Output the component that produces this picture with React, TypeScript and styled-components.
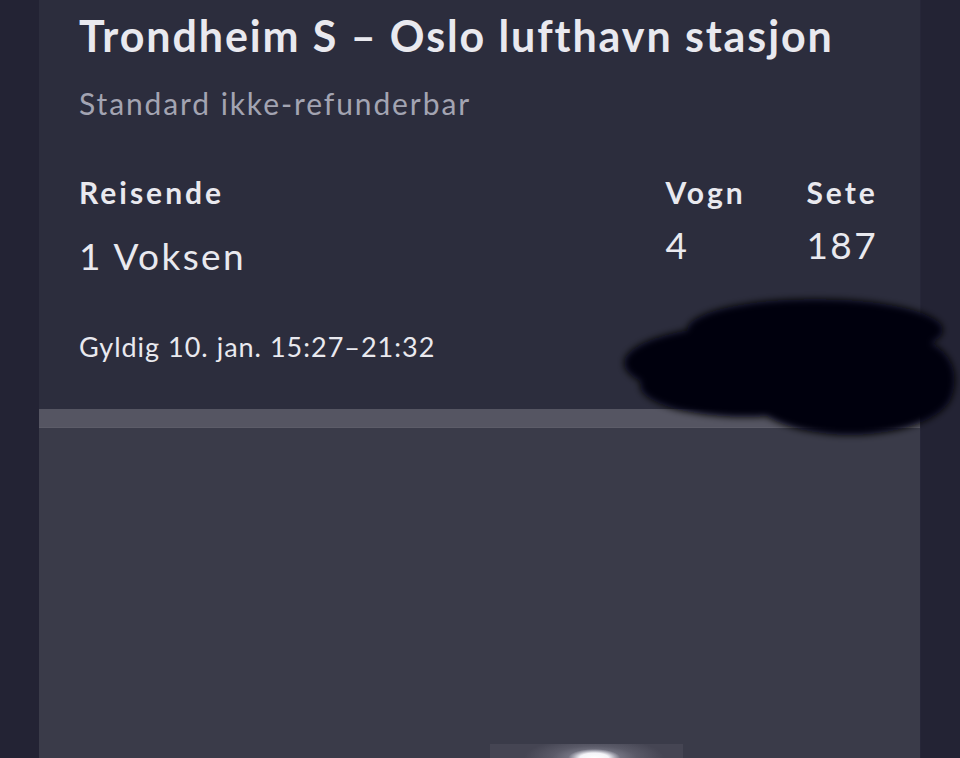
import styled, { createGlobalStyle } from "styled-components";

const GlobalStyle = createGlobalStyle`
    html, body {
        margin: 0;
        padding: 0;
        background: #232334;
    }
    body {
        font-family: Lato, "Open Sans", sans-serif;
        -webkit-font-smoothing: antialiased;
    }
`;

const Page = styled.div`
    position: relative;
    display: flex;
    height: 758px;
    overflow: hidden;
    padding-left: 39px;
    background: #232334;
`;

const Ticket = styled.div`
    width: 882px;
    display: flex;
    flex-direction: column;
    border-right: 1px solid #262638;
    box-sizing: border-box;
`;

const Header = styled.div`
    background: #2c2d3d;
    padding: 14px 42px 49px 40px;
    color: #e9e9ef;
`;

const Title = styled.h1`
    margin: 0;
    font-size: 43px;
    line-height: 1;
    font-weight: 700;
    letter-spacing: 1.9px;
`;

const Subtitle = styled.p`
    margin: 31px 0 0;
    font-size: 30px;
    line-height: 1;
    color: #a3a4b2;
    letter-spacing: 1.9px;
`;

const InfoRow = styled.div`
    display: flex;
    justify-content: space-between;
    margin-top: 59px;
`;

const Field = styled.div<{ $gap: number; $width?: number }>`
    display: flex;
    flex-direction: column;
    gap: ${(p) => p.$gap}px;
    width: ${(p) => (p.$width ? `${p.$width}px` : "auto")};
`;

const SeatGroup = styled.div`
    display: flex;
`;

const Label = styled.span`
    font-size: 30px;
    line-height: 1;
    font-weight: 700;
    letter-spacing: 3px;
`;

const Value = styled.span`
    font-size: 37px;
    line-height: 1;
    letter-spacing: 2.4px;
`;

const Valid = styled.p`
    margin: 59px 0 0;
    font-size: 27px;
    line-height: 1;
    letter-spacing: 1px;
`;

const Divider = styled.div`
    height: 19px;
    background: #555562;
    border-bottom: 1px solid #5c5c68;
    box-sizing: border-box;
`;

const Body = styled.div`
    flex: 1;
    background: #3a3b49;
    display: flex;
    flex-direction: column;
    justify-content: flex-end;
    align-items: center;
`;

const CodeGlare = styled.div`
    width: 193px;
    height: 14px;
    margin-left: 214px;
    background:
        radial-gradient(ellipse 26px 9px at 54% 100%, #ffffff 0%, #f4f4f8 55%, rgba(200, 200, 210, 0.6) 80%, rgba(200, 200, 210, 0) 100%),
        radial-gradient(ellipse 70px 20px at 54% 100%, #9a9aa8 0%, #5a5a68 60%, #454553 100%);
`;

const Scribble = styled.svg`
    position: absolute;
    left: 615px;
    top: 285px;
`;

export default function App() {
    return (
        <Page>
            <GlobalStyle />
            <Ticket>
                <Header>
                    <Title>Trondheim S – Oslo lufthavn stasjon</Title>
                    <Subtitle>Standard ikke-refunderbar</Subtitle>
                    <InfoRow>
                        <Field $gap={30}>
                            <Label>Reisende</Label>
                            <Value>1 Voksen</Value>
                        </Field>
                        <SeatGroup>
                            <Field $gap={19} $width={141}>
                                <Label>Vogn</Label>
                                <Value>4</Value>
                            </Field>
                            <Field $gap={19}>
                                <Label>Sete</Label>
                                <Value>187</Value>
                            </Field>
                        </SeatGroup>
                    </InfoRow>
                    <Valid>Gyldig 10. jan. 15:27–21:32</Valid>
                </Header>
                <Divider />
                <Body>
                    <CodeGlare />
                </Body>
            </Ticket>
            <Scribble width="345" height="160" viewBox="0 0 345 160">
                <defs>
                    <filter id="soft" x="-10%" y="-10%" width="120%" height="120%">
                        <feGaussianBlur stdDeviation="3.5" />
                    </filter>
                </defs>
                <g fill="#060609" filter="url(#soft)">
                    <ellipse cx="200" cy="45" rx="128" ry="31" />
                    <ellipse cx="155" cy="78" rx="146" ry="40" />
                    <ellipse cx="235" cy="105" rx="103" ry="45" />
                    <ellipse cx="130" cy="100" rx="105" ry="32" />
                    <ellipse cx="300" cy="95" rx="40" ry="40" />
                </g>
            </Scribble>
        </Page>
    );
}
